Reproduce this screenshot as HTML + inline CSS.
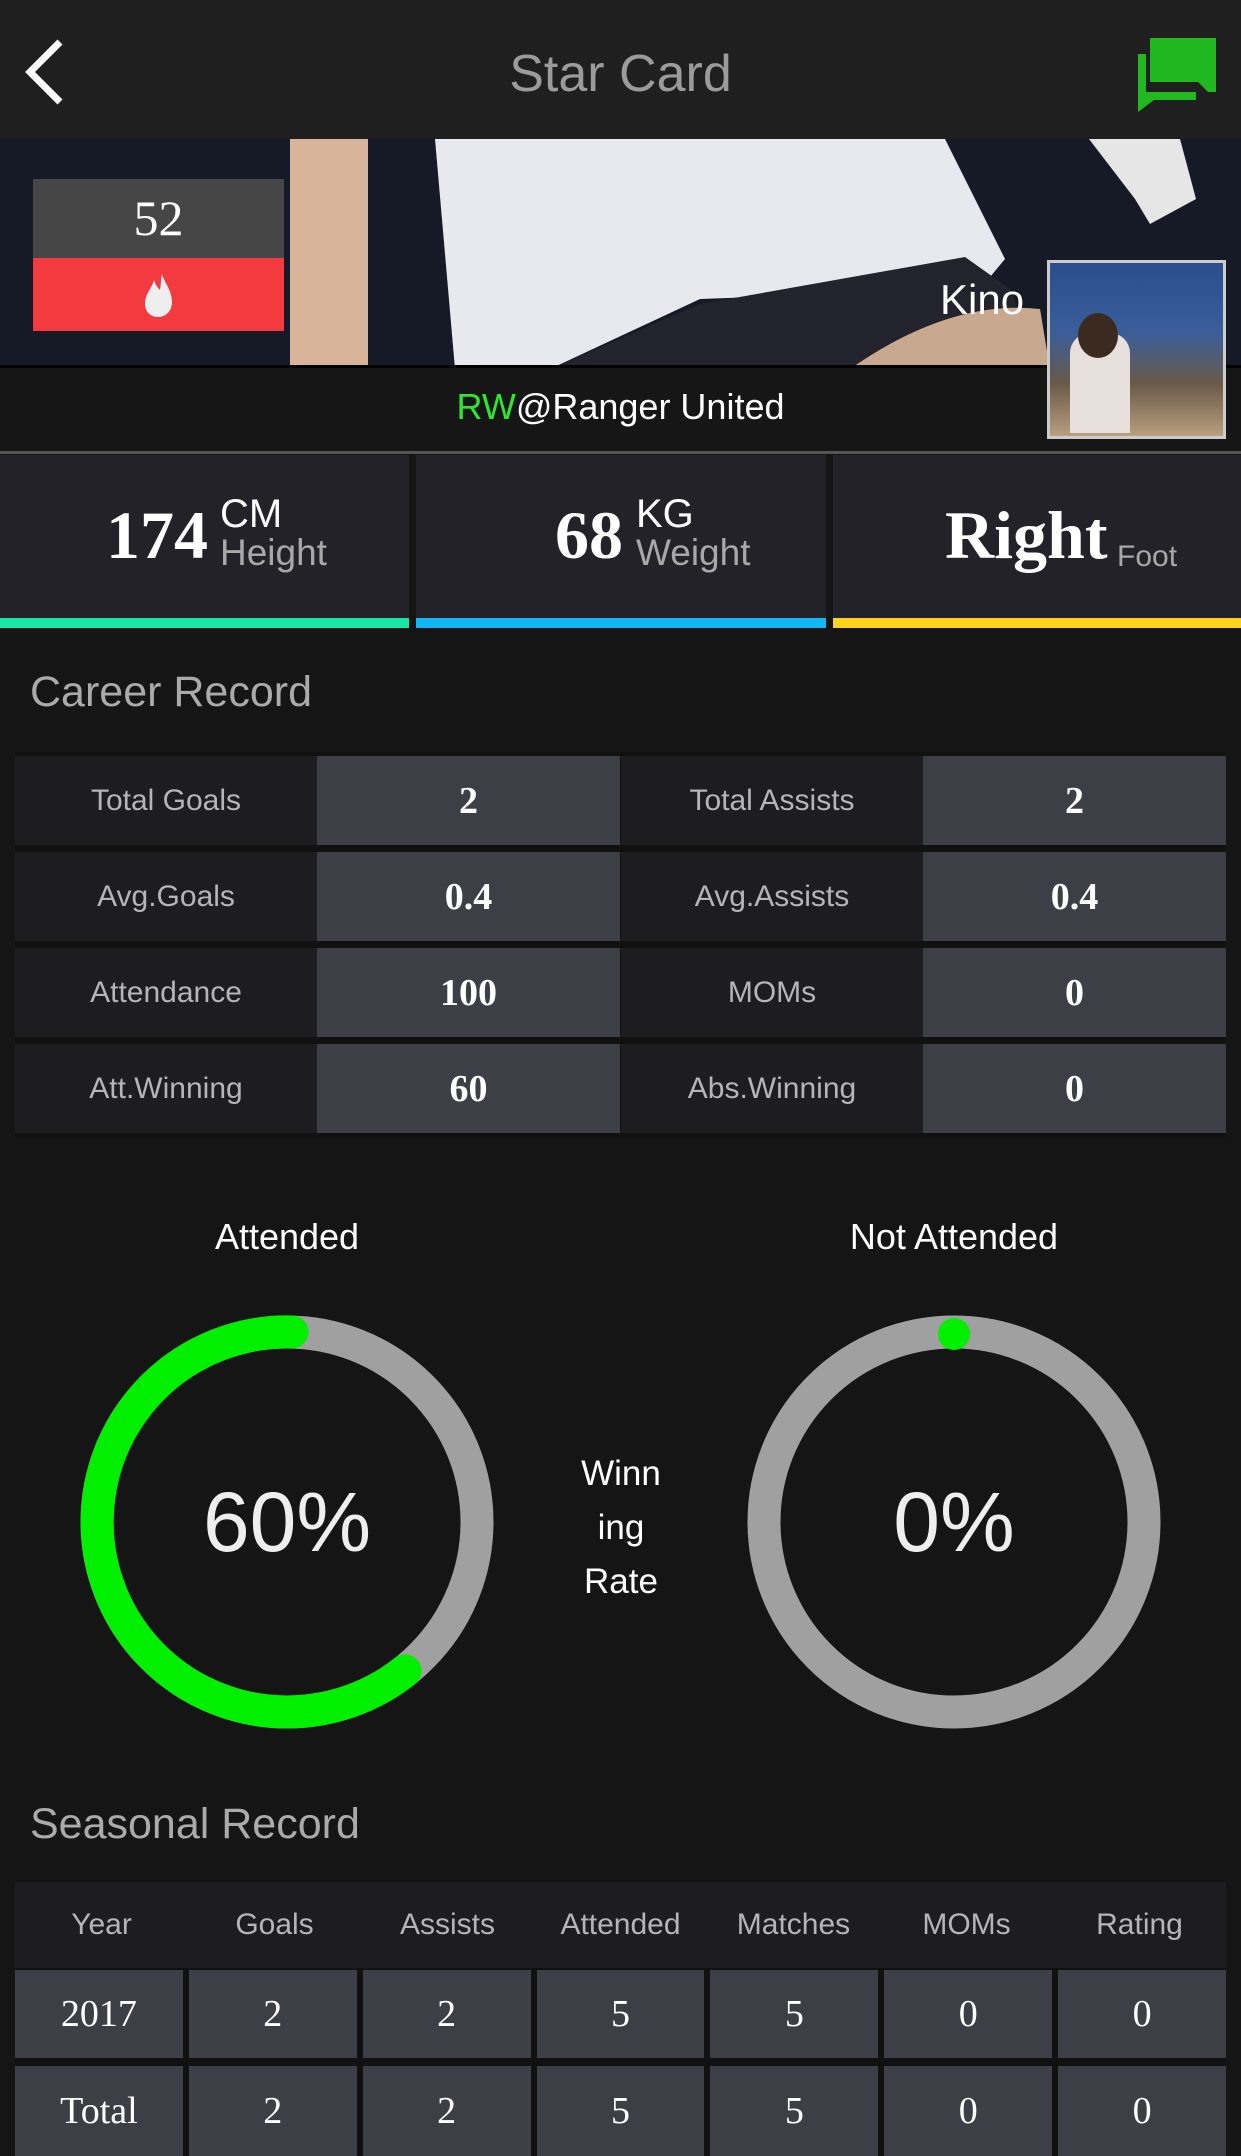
<!DOCTYPE html>
<html><head><meta charset="utf-8"><style>
*{margin:0;padding:0;box-sizing:border-box}
body{width:1241px;height:2156px;background:#151515;font-family:"Liberation Sans",sans-serif;position:relative;overflow:hidden}
.abs{position:absolute}
.hdr{left:0;top:0;width:1241px;height:139px;background:#1f1f1f}
.title{left:0;width:1241px;top:44px;text-align:center;font-size:52px;color:#9b9b9b}
.serif{font-family:"Liberation Serif",serif}
.box{background:#232229}
.lbl{background:#1c1c21;color:#b5b5b5;font-size:30px;display:flex;align-items:center;justify-content:center}
.val{background:#3d3f47;color:#fff;font-family:"Liberation Serif",serif;font-weight:bold;font-size:38px;display:flex;align-items:center;justify-content:center}
.sh{background:#1c1c21;color:#b5b5b5;font-size:30px;display:flex;align-items:center;justify-content:center}
.sv{background:#3d3f47;color:#fff;font-family:"Liberation Serif",serif;font-size:38px;display:flex;align-items:center;justify-content:center}
</style></head><body>
<div class="abs hdr"></div>
<svg class="abs" style="left:20px;top:38px" width="50" height="68" viewBox="0 0 50 68"><path d="M40 4 L10 34 L40 64" stroke="#fff" stroke-width="7" fill="none"/></svg>
<div class="abs title">Star Card</div>
<svg class="abs" style="left:1136px;top:36px" width="82" height="76" viewBox="0 0 82 76">
<path d="M2 18 H10 V56 H60 V64 H18 L2 76 Z" fill="#1fb81f"/>
<path d="M14 2 H80 V56 H72 L62 46 H14 Z" fill="#1fb81f"/>
</svg>
<svg class="abs" style="left:0;top:139px" width="1241" height="230" viewBox="0 0 1241 230">
<rect width="1241" height="230" fill="#161a26"/>
<rect x="290" y="0" width="78" height="230" fill="#d8b49a"/>
<path d="M435 0 H945 L1005 120 L980 150 L700 160 L550 230 H455 Z" fill="#e8e9ee"/>
<path d="M550 230 L700 165 L965 118 L1010 150 L1040 230 Z" fill="#22232c"/>
<path d="M850 230 Q950 160 1040 170 L1050 230 Z" fill="#c9a890"/>
<path d="M1089 0 H1180 L1196 60 L1150 85 L1135 60 Z" fill="#e6e6e6"/>
<rect x="0" y="226" width="1241" height="4" fill="#000"/>
</svg>
<div class="abs" style="left:33px;top:179px;width:251px;height:79px;background:#464646;color:#fff;font-family:'Liberation Serif',serif;font-size:50px;text-align:center;line-height:79px">52</div>
<div class="abs" style="left:33px;top:258px;width:251px;height:73px;background:#f23a3f"></div>
<svg class="abs" style="left:142px;top:272px" width="32" height="46" viewBox="0 0 32 46"><path d="M20 2 C22 10 30 18 30 30 C30 39 24 45 16 45 C8 45 3 39 3 32 C3 22 10 16 12 8 C14 14 16 16 18 18 C19 12 19 7 20 2 Z" fill="#eee"/></svg>
<div class="abs" style="left:0;top:368px;width:1241px;height:83px;background:#161616"></div>
<div class="abs" style="left:0;top:386px;width:1241px;text-align:center;font-size:36px;color:#fff">
<span style="color:#2ee62e">RW</span>@Ranger United</div>
<div class="abs" style="left:940px;top:276px;font-size:42px;color:#fff">Kino</div>
<div class="abs" style="left:1047px;top:260px;width:179px;height:179px;border:3px solid #ccc;background:linear-gradient(180deg,#2a4e8c 0%,#3a5e9a 40%,#6a5a48 70%,#b8a080 100%)">
<div style="position:absolute;left:20px;top:70px;width:60px;height:100px;background:#e8e0dc;border-radius:20px 20px 0 0"></div>
<div style="position:absolute;left:28px;top:50px;width:40px;height:45px;background:#3a2a20;border-radius:50%"></div>
</div>
<div class="abs" style="left:0;top:451px;width:1241px;height:3px;background:#555"></div>
<div class="abs box" style="left:0;top:455px;width:409px;height:163px"></div>
<div class="abs box" style="left:416px;top:455px;width:410px;height:163px"></div>
<div class="abs box" style="left:833px;top:455px;width:408px;height:163px"></div>
<div class="abs" style="left:0;top:618px;width:409px;height:10px;background:#17e7a6"></div>
<div class="abs" style="left:416px;top:618px;width:410px;height:10px;background:#12b6f2"></div>
<div class="abs" style="left:833px;top:618px;width:408px;height:10px;background:#ffd21c"></div>
<div class="abs serif" style="left:106px;top:496px;font-size:68px;font-weight:bold;color:#fff">174</div>
<div class="abs" style="left:220px;top:492px;font-size:40px;color:#fff">CM</div>
<div class="abs" style="left:220px;top:532px;font-size:37px;color:#a8a8a8">Height</div>
<div class="abs serif" style="left:555px;top:496px;font-size:68px;font-weight:bold;color:#fff">68</div>
<div class="abs" style="left:636px;top:492px;font-size:40px;color:#fff">KG</div>
<div class="abs" style="left:636px;top:532px;font-size:37px;color:#a8a8a8">Weight</div>
<div class="abs serif" style="left:945px;top:496px;font-size:68px;font-weight:bold;color:#fff">Right</div>
<div class="abs" style="left:1117px;top:540px;font-size:30px;color:#a8a8a8">Foot</div>
<div class="abs" style="left:30px;top:668px;font-size:43px;color:#aaa">Career Record</div>
<div class="abs" style="left:15px;top:752px;width:1211px;height:386px;background:#111"></div>
<div class="abs lbl" style="left:15px;top:756px;width:302px;height:89px">Total Goals</div>
<div class="abs val" style="left:317px;top:756px;width:303px;height:89px">2</div>
<div class="abs lbl" style="left:621px;top:756px;width:302px;height:89px">Total Assists</div>
<div class="abs val" style="left:923px;top:756px;width:303px;height:89px">2</div>
<div class="abs lbl" style="left:15px;top:852px;width:302px;height:89px">Avg.Goals</div>
<div class="abs val" style="left:317px;top:852px;width:303px;height:89px">0.4</div>
<div class="abs lbl" style="left:621px;top:852px;width:302px;height:89px">Avg.Assists</div>
<div class="abs val" style="left:923px;top:852px;width:303px;height:89px">0.4</div>
<div class="abs lbl" style="left:15px;top:948px;width:302px;height:89px">Attendance</div>
<div class="abs val" style="left:317px;top:948px;width:303px;height:89px">100</div>
<div class="abs lbl" style="left:621px;top:948px;width:302px;height:89px">MOMs</div>
<div class="abs val" style="left:923px;top:948px;width:303px;height:89px">0</div>
<div class="abs lbl" style="left:15px;top:1044px;width:302px;height:89px">Att.Winning</div>
<div class="abs val" style="left:317px;top:1044px;width:303px;height:89px">60</div>
<div class="abs lbl" style="left:621px;top:1044px;width:302px;height:89px">Abs.Winning</div>
<div class="abs val" style="left:923px;top:1044px;width:303px;height:89px">0</div>
<div class="abs" style="left:87px;top:1216px;width:400px;text-align:center;font-size:36px;color:#fff">Attended</div>
<div class="abs" style="left:754px;top:1216px;width:400px;text-align:center;font-size:36px;color:#fff">Not Attended</div>
<svg class="abs" style="left:0;top:1300px" width="1241" height="450" viewBox="0 1300 1241 450">
<circle cx="287" cy="1522" r="190" fill="none" stroke="#a0a0a0" stroke-width="33"/>
<path d="M292 1332 A190 190 0 1 0 405 1671" fill="none" stroke="#00f000" stroke-width="33" stroke-linecap="round"/>
<circle cx="954" cy="1522" r="190" fill="none" stroke="#a0a0a0" stroke-width="33"/>
<circle cx="954" cy="1334" r="16" fill="#00f000"/>
</svg>
<div class="abs" style="left:87px;top:1474px;width:400px;text-align:center;font-size:84px;color:#eee">60%</div>
<div class="abs" style="left:754px;top:1474px;width:400px;text-align:center;font-size:84px;color:#eee">0%</div>
<div class="abs" style="left:521px;top:1447px;width:200px;text-align:center;font-size:35px;color:#fff;line-height:54px">Winn<br>ing<br>Rate</div>
<div class="abs" style="left:30px;top:1800px;font-size:43px;color:#aaa">Seasonal Record</div>
<div class="abs sh" style="left:15px;top:1882px;width:1211px;height:86px"></div>
<div class="abs" style="left:15px;top:1968px;width:1211px;height:188px;background:#111"></div>
<div class="abs" style="left:15px;top:1882px;width:1211px;height:86px;display:flex;color:#b5b5b5;font-size:30px">
<div style="flex:1;display:flex;align-items:center;justify-content:center">Year</div>
<div style="flex:1;display:flex;align-items:center;justify-content:center">Goals</div>
<div style="flex:1;display:flex;align-items:center;justify-content:center">Assists</div>
<div style="flex:1;display:flex;align-items:center;justify-content:center">Attended</div>
<div style="flex:1;display:flex;align-items:center;justify-content:center">Matches</div>
<div style="flex:1;display:flex;align-items:center;justify-content:center">MOMs</div>
<div style="flex:1;display:flex;align-items:center;justify-content:center">Rating</div>
</div>
<div class="abs" style="left:15px;top:1970px;width:1211px;height:88px;display:flex;gap:6px">
<div class="sv" style="flex:1">2017</div><div class="sv" style="flex:1">2</div><div class="sv" style="flex:1">2</div><div class="sv" style="flex:1">5</div><div class="sv" style="flex:1">5</div><div class="sv" style="flex:1">0</div><div class="sv" style="flex:1">0</div>
</div>
<div class="abs" style="left:15px;top:2066px;width:1211px;height:90px;display:flex;gap:6px">
<div class="sv" style="flex:1">Total</div><div class="sv" style="flex:1">2</div><div class="sv" style="flex:1">2</div><div class="sv" style="flex:1">5</div><div class="sv" style="flex:1">5</div><div class="sv" style="flex:1">0</div><div class="sv" style="flex:1">0</div>
</div>
</body></html>
